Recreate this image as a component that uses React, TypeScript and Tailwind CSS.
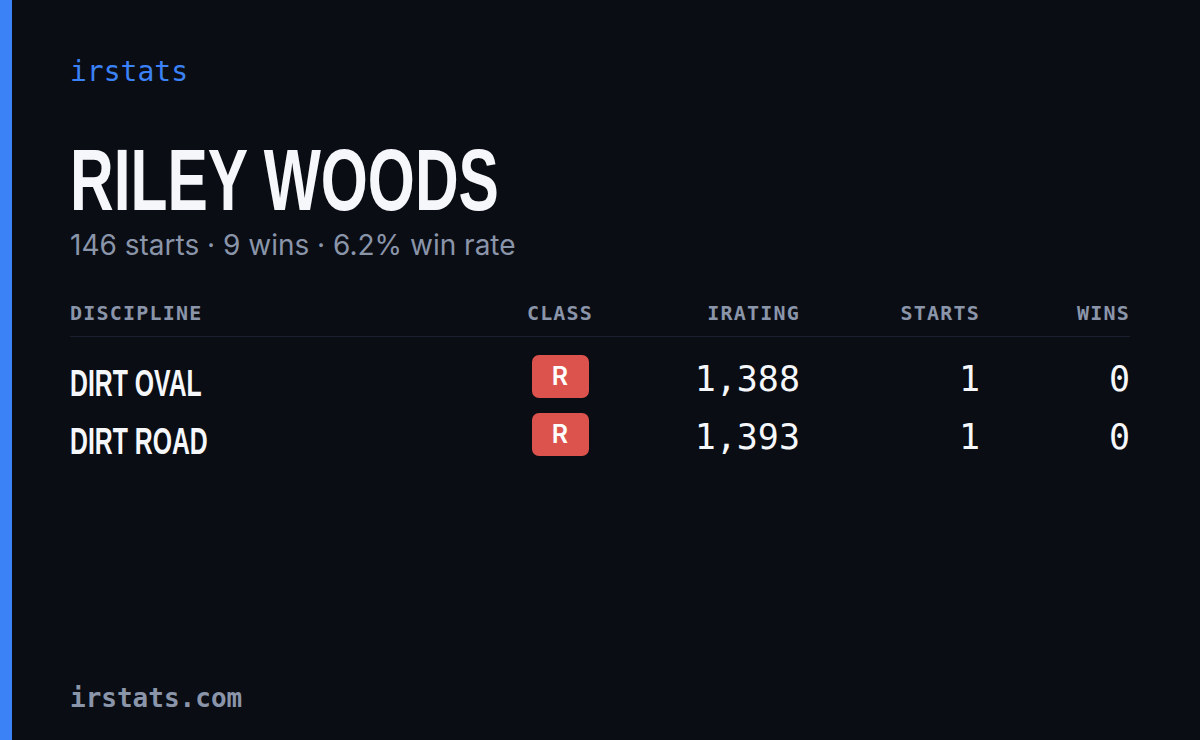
import React from 'react';

const rows = [
    { name: 'Dirt Oval', cls: 'R', irating: '1,388', starts: '1', wins: '0' },
    { name: 'Dirt Road', cls: 'R', irating: '1,393', starts: '1', wins: '0' },
];

const mono = "font-['DejaVu_Sans_Mono',monospace]";
const narrow = "font-['Liberation_Sans','Arial',sans-serif]";

export default function App() {
    return (
        <div className="flex h-[740px] w-full bg-[#0a0d14] overflow-hidden">
            {/* accent bar */}
            <div className="w-[12px] shrink-0 bg-[#3b82f6]" />

            <div className="flex flex-1 flex-col pl-[58px] pr-[70px] pt-[56px] pb-[26px]">
                <div className={`${mono} text-[28px] leading-[32px] text-[#3b82f6]`}>irstats</div>

                {/* player */}
                <div className="mt-[52px]">
                    <h1 className={`${narrow} origin-left scale-x-[0.695] whitespace-nowrap text-[87px] leading-[80px] font-bold uppercase text-[#f5f7fa]`}>
                        Riley Woods
                    </h1>
                    <p className="mt-[8px] font-['Inter',sans-serif] text-[28px] leading-[34px] text-[#8a95aa]">
                        146 starts · 9 wins · 6.2% win rate
                    </p>
                </div>

                {/* table */}
                <div className="mt-[36px]">
                    <div className={`${mono} grid grid-cols-[1fr_130px_175px_180px_150px] items-center pb-[10px] pt-[2px] border-b border-[#1b2030] text-[20px] leading-[26px] font-bold tracking-[1.2px] uppercase text-[#8a95aa]`}>
                        <div>Discipline</div>
                        <div className="text-center">Class</div>
                        <div className="text-right">iRating</div>
                        <div className="text-right">Starts</div>
                        <div className="text-right">Wins</div>
                    </div>

                    <div className="pt-[4px]">
                        {rows.map((r) => (
                            <div key={r.name} className="grid h-[58px] grid-cols-[1fr_130px_175px_180px_150px] items-center">
                                <div className={`${narrow} origin-left scale-x-[0.67] whitespace-nowrap pt-[15px] text-[37px] font-bold uppercase text-[#f5f7fa]`}>
                                    {r.name}
                                </div>
                                <div className="flex justify-center">
                                    <span className="flex h-[43px] w-[57px] items-center justify-center rounded-[7px] bg-[#dc534d] font-['Inter',sans-serif] text-[25px] font-semibold text-white">
                                        {r.cls}
                                    </span>
                                </div>
                                <div className={`${mono} pt-[6px] text-right text-[35px] text-[#f5f7fa]`}>{r.irating}</div>
                                <div className={`${mono} pt-[6px] text-right text-[35px] text-[#f5f7fa]`}>{r.starts}</div>
                                <div className={`${mono} pt-[6px] text-right text-[35px] text-[#f5f7fa]`}>{r.wins}</div>
                            </div>
                        ))}
                    </div>
                </div>

                <div className={`${mono} mt-auto text-[26px] leading-[32px] font-bold text-[#8a95aa]`}>irstats.com</div>
            </div>
        </div>
    );
}
